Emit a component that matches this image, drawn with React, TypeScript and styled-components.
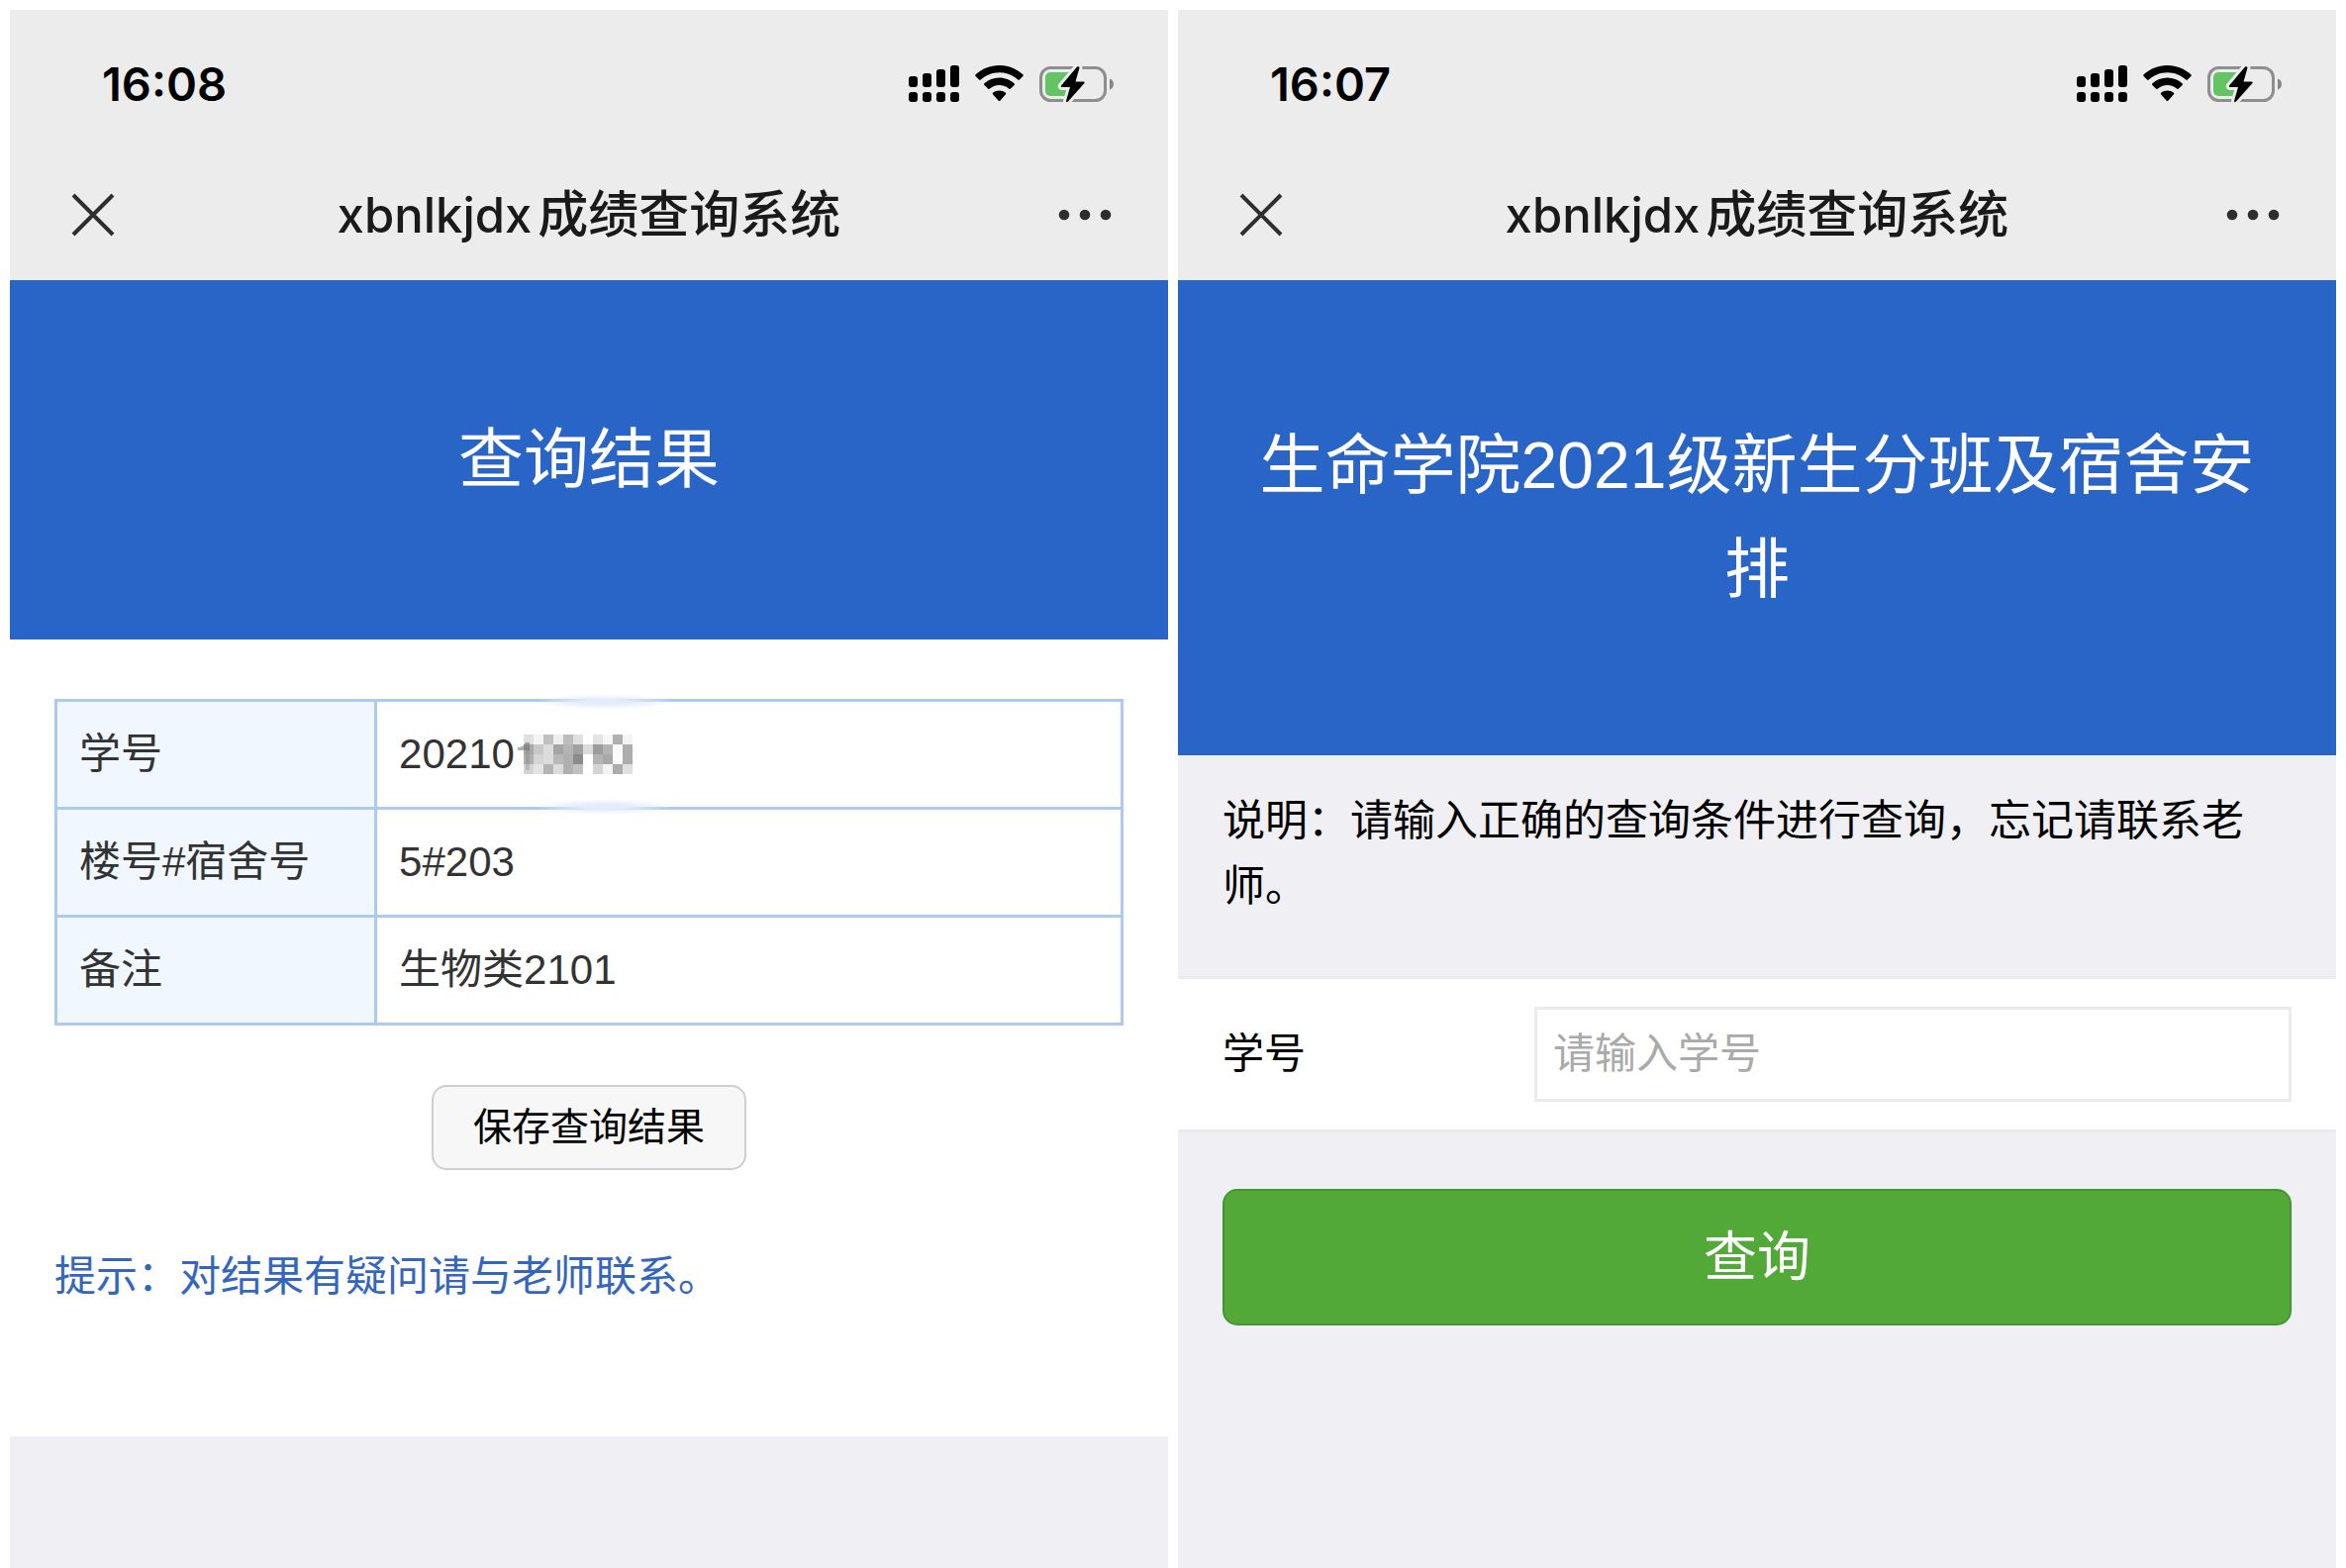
import React from 'react';
import styled, { createGlobalStyle } from 'styled-components';

const sans = `"Liberation Sans", "Noto Sans CJK SC", sans-serif`;
const system = `Inter, "Noto Sans CJK SC", sans-serif`;

const GlobalStyle = createGlobalStyle`
  *, *::before, *::after { box-sizing: border-box; }
  body { margin: 0; background: #fff; font-family: ${sans}; }
  h1, h2, p { margin: 0; font-weight: 400; }
  button, input { font-family: inherit; margin: 0; }
`;

const Page = styled.main`
  display: grid;
  grid-template-columns: 1fr 1fr;
  gap: 10px;
  min-height: 100vh;
  padding: 10px 10px 0;
`;

const Phone = styled.section`
  display: flex;
  flex-direction: column;
  min-width: 0;
  background: #efeff4;
`;

const Chrome = styled.header`
  background: #ececec;
`;

const StatusBar = styled.div`
  display: flex;
  align-items: center;
  justify-content: space-between;
  height: 149px;
  padding: 0 54px 0 93px;
`;

const Clock = styled.span`
  font: 600 47px/56px ${system};
  color: #000;
`;

const StatusIcons = styled.div`
  display: flex;
  align-items: center;
  gap: 16px;
`;

const NavBar = styled.div`
  display: grid;
  grid-template-columns: 60px 1fr 60px;
  align-items: center;
  height: 124px;
  padding: 0 54px 8px;
`;

const NavTitle = styled.h1`
  font: 500 51px/72px ${system};
  color: #1a1a1a;
  text-align: center;
  white-space: nowrap;
`;

const LatinName = styled.span`
  margin-right: 6px;
  font-size: 49px;
`;

const IconButton = styled.button`
  display: flex;
  align-items: center;
  justify-content: center;
  height: 60px;
  padding: 0;
  border: 0;
  background: none;
`;

const Banner = styled.div<{ $line: number }>`
  padding: 135px 64px;
  background: #2964c7;
  color: #fff;
  text-align: center;
  line-height: ${(p) => p.$line}px;
`;

const BannerTitle = styled.h2`
  font-size: 66px;
  line-height: inherit;
  font-weight: 400;
`;

const Result = styled.div`
  display: flex;
  flex-direction: column;
  align-items: center;
  padding: 60px 45px 128px;
  background: #fff;
`;

const Table = styled.table`
  width: 100%;
  border-collapse: collapse;
  table-layout: fixed;
  font-size: 42px;
  line-height: 60px;
  color: #333;
`;

const cell = `
  height: 109px;
  padding: 0 22px;
  border: 3px solid #accbee;
  text-align: left;
  font-weight: 400;
`;

const HeadCell = styled.th`
  ${cell}
  width: 30%;
  background: #f0f7fe;
`;

const DataCell = styled.td`
  ${cell}
  position: relative;
`;

const Masked = styled.div`
  display: flex;
  align-items: center;
`;

const Smudge = styled.span<{ $edge: 'top' | 'bottom' }>`
  position: absolute;
  ${(p) => p.$edge}: -8px;
  left: 160px;
  width: 140px;
  height: 16px;
  background: radial-gradient(closest-side, #e3ecfb 30%, rgba(240, 245, 253, 0));
`;

const SaveButton = styled.button`
  margin-top: 60px;
  padding: 11px 40px;
  border: 2px solid #cfcfcf;
  border-radius: 15px;
  background: #f7f7f7;
  color: #000;
  font-size: 39px;
  line-height: 60px;
`;

const Tip = styled.p`
  align-self: stretch;
  margin-top: 75px;
  color: #3566bd;
  font-size: 42px;
  line-height: 66px;
`;

const Note = styled.p`
  padding: 33px 45px 58px;
  color: #000;
  font-size: 43px;
  line-height: 66px;
`;

const Field = styled.div`
  display: grid;
  grid-template-columns: 315px 1fr;
  align-items: center;
  padding: 28px 45px;
  border: solid #ebebed;
  border-width: 3px 0;
  background: #fff;
`;

const Label = styled.label`
  font-size: 42px;
  line-height: 60px;
  color: #000;
`;

const TextInput = styled.input`
  width: 100%;
  height: 96px;
  padding: 0 16px;
  border: 3px solid #ebebeb;
  border-radius: 0;
  background: #fff;
  font-size: 42px;
  color: #000;
  &::placeholder { color: #aaa; opacity: 1; }
`;

const QueryButton = styled.button`
  display: block;
  width: calc(100% - 90px);
  height: 138px;
  margin: 57px 45px 0;
  border: 2px solid #469534;
  border-radius: 15px;
  background: #52a938;
  color: #fff;
  font-size: 54px;
  font-weight: 400;
  line-height: 72px;
`;

const signalTops = [11, 8, 4, 0];

function SignalIcon() {
  return (
    <svg width="51" height="37" viewBox="0 0 51 37" aria-hidden="true">
      {signalTops.map((top, i) => (
        <g key={top}>
          <rect x={i * 14} y={top} width="9" height={22 - top} rx="3" />
          <rect x={i * 14} y="27" width="9" height="10" rx="3" />
        </g>
      ))}
    </svg>
  );
}

function WifiIcon() {
  return (
    <svg width="49" height="37" viewBox="0 0 49 37" aria-hidden="true">
      <path d="M24.500 0C15.400 0 7 3.500 .6 9.300q-.8.800 0 1.600l3.500 3.600q.8.800 1.600 0C10.800 10 17.300 7.200 24.500 7.200S38.200 10 43.300 14.500q.8.800 1.600 0l3.500-3.600q.8-.8 0-1.600C42 3.500 33.600 0 24.500 0Z" />
      <path d="M24.500 12.600c-5.800 0-11 2.200-15.100 5.700q-.8.800 0 1.600l3.600 3.700q.8.800 1.600.1c2.700-2.300 6.100-3.800 9.900-3.800s7.200 1.500 9.900 3.800q.8.700 1.600-.1l3.600-3.700q.8-.8 0-1.600c-4.100-3.500-9.300-5.700-15.100-5.700Z" />
      <path d="M24.500 25.500c-2.400 0-4.600.8-6.400 2.200q-.9.800-.1 1.600l5.700 6.400q.8.800 1.600 0l5.700-6.400q.8-.8-.1-1.600c-1.800-1.400-4-2.200-6.400-2.200Z" />
    </svg>
  );
}

function BatteryIcon() {
  return (
    <svg width="76" height="38" viewBox="0 0 76 38" aria-hidden="true">
      <rect x="1.500" y="2.500" width="65" height="33" rx="10" fill="none" stroke="#8e8e8e" strokeWidth="3" />
      <path d="M71 13.500c2.500.8 4 3 4 5.500s-1.500 4.700-4 5.500Z" fill="#858585" />
      <rect x="6" y="7" width="34" height="24" rx="5" fill="#62c462" />
      <path
        d="M38 1.500 22 20.500q-.8 1.500 1 1.500h8l-4 14q0 2 2 .5L45.500 18q.8-1.500-1-1.500H36.500l4-14q-.3-2-2.500-1Z"
        stroke="#ececec"
        strokeWidth="6"
        strokeLinejoin="round"
        paintOrder="stroke"
      />
    </svg>
  );
}

function CloseIcon() {
  return (
    <svg width="44" height="44" viewBox="0 0 44 44" aria-hidden="true">
      <path d="M2 2 42 42M42 2 2 42" stroke="#2e2e2e" strokeWidth="4" />
    </svg>
  );
}

function MoreIcon() {
  return (
    <svg width="54" height="12" viewBox="0 0 54 12" fill="#2e2e2e" aria-hidden="true">
      <circle cx="6" cy="6" r="5.300" />
      <circle cx="27" cy="6" r="5.300" />
      <circle cx="48" cy="6" r="5.300" />
    </svg>
  );
}

const shades = [
  ['e0', 'f4', 'c0', 'ee', 'bd', 'e0', 'ff', 'e3', 'f6', 'b0', 'f4'],
  ['a8', 'c8', 'dc', 'a4', 'b4', 'a0', 'dc', '9c', 'b4', 'fa', 'ad'],
  ['b0', 'd4', 'dc', 'b8', 'b0', '8c', 'ff', 'b4', 'a8', 'fc', 'ad'],
  ['d4', 'e4', 'b4', 'dc', 'b0', 'c0', 'ff', 'd4', 'f4', 'ac', 'e0'],
];

function Mosaic() {
  return (
    <svg width="119" height="40" viewBox="0 0 119 40" role="img" aria-label="已隐藏">
      {shades.map((row, y) =>
        row.map((s, x) => (
          <rect key={`${x}-${y}`} x={9 + x * 10} y={y * 10} width="10" height="10" fill={`#${s}${s}${s}`} />
        )),
      )}
      <path d="M3 13q6 0 8-5h4v8H3Z" fill="#777" opacity=".6" />
      <path d="M11 12h4v24h-4Z" fill="#777" opacity=".3" />
    </svg>
  );
}

function PhoneChrome({ time }: { time: string }) {
  return (
    <Chrome>
      <StatusBar>
        <Clock>{time}</Clock>
        <StatusIcons>
          <SignalIcon />
          <WifiIcon />
          <BatteryIcon />
        </StatusIcons>
      </StatusBar>
      <NavBar>
        <IconButton type="button" aria-label="关闭">
          <CloseIcon />
        </IconButton>
        <NavTitle>
          <LatinName>xbnlkjdx</LatinName>成绩查询系统
        </NavTitle>
        <IconButton type="button" aria-label="更多">
          <MoreIcon />
        </IconButton>
      </NavBar>
    </Chrome>
  );
}

export default function App() {
  return (
    <>
      <GlobalStyle />
      <Page lang="zh-CN">
        <Phone>
          <PhoneChrome time="16:08" />
          <Banner $line={93}>
            <BannerTitle>查询结果</BannerTitle>
          </Banner>
          <Result>
            <Table>
              <tbody>
                <tr>
                  <HeadCell scope="row">学号</HeadCell>
                  <DataCell>
                    <Smudge $edge="top" />
                    <Masked>
                      20210
                      <Mosaic />
                    </Masked>
                    <Smudge $edge="bottom" />
                  </DataCell>
                </tr>
                <tr>
                  <HeadCell scope="row">楼号#宿舍号</HeadCell>
                  <DataCell>5#203</DataCell>
                </tr>
                <tr>
                  <HeadCell scope="row">备注</HeadCell>
                  <DataCell>生物类2101</DataCell>
                </tr>
              </tbody>
            </Table>
            <SaveButton type="button">保存查询结果</SaveButton>
            <Tip>提示：对结果有疑问请与老师联系。</Tip>
          </Result>
        </Phone>

        <Phone>
          <PhoneChrome time="16:07" />
          <Banner $line={105}>
            <BannerTitle>生命学院2021级新生分班及宿舍安排</BannerTitle>
          </Banner>
          <Note>说明：请输入正确的查询条件进行查询，忘记请联系老师。</Note>
          <form onSubmit={(e) => e.preventDefault()}>
            <Field>
              <Label htmlFor="student-id">学号</Label>
              <TextInput id="student-id" type="text" placeholder="请输入学号" />
            </Field>
            <QueryButton type="submit">查询</QueryButton>
          </form>
        </Phone>
      </Page>
    </>
  );
}
